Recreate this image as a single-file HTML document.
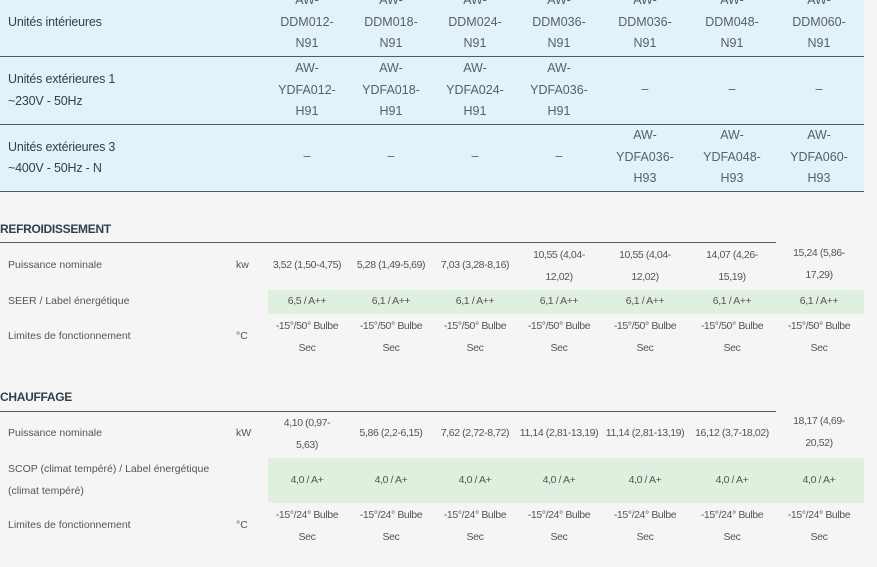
<!DOCTYPE html>
<html><head><meta charset="utf-8"><style>
*{margin:0;padding:0;box-sizing:border-box}
body{width:877px;height:567px;overflow:hidden;background:#f5f5f5;font-family:"Liberation Sans",sans-serif;position:relative;color:#555}
.a{position:absolute}
.blue{left:0;top:0;width:864px;height:192px;background:#e2f2fa}
.hl{position:absolute;height:1px;background:#4e5d6b}
.lab{position:absolute;left:8px;font-size:12.5px;color:#333f4c;line-height:22px;letter-spacing:-0.2px}
.c{position:absolute;width:90px;text-align:center;font-size:12.5px;line-height:21.5px;color:#5a5f66}
.s{position:absolute;width:90px;text-align:center;font-size:10.5px;line-height:22px;color:#555;letter-spacing:-0.4px;white-space:nowrap}
.l{position:absolute;left:8px;font-size:10.5px;line-height:22px;color:#555}
.u{position:absolute;left:236px;font-size:10.5px;line-height:22px;color:#555}
.h{position:absolute;left:0;font-size:12px;color:#333f4c;font-weight:600;letter-spacing:-0.3px}
.g{position:absolute;left:268px;width:596px;background:#e0f0df}
</style></head><body>
<div class="a blue"></div>
<div class="hl" style="left:0;top:56px;width:864px"></div>
<div class="hl" style="left:0;top:124px;width:864px"></div>
<div class="hl" style="left:0;top:191px;width:864px"></div>
<div class="lab" style="top:11px">Unités intérieures</div>
<div class="lab" style="top:68px">Unités extérieures 1</div>
<div class="lab" style="top:90px">~230V - 50Hz</div>
<div class="lab" style="top:136px">Unités extérieures 3</div>
<div class="lab" style="top:157px">~400V - 50Hz - N</div>

<div class="c" style="left:262px;top:-10px">AW-<br>DDM012-<br>N91</div>
<div class="c" style="left:346px;top:-10px">AW-<br>DDM018-<br>N91</div>
<div class="c" style="left:430px;top:-10px">AW-<br>DDM024-<br>N91</div>
<div class="c" style="left:514px;top:-10px">AW-<br>DDM036-<br>N91</div>
<div class="c" style="left:600px;top:-10px">AW-<br>DDM036-<br>N91</div>
<div class="c" style="left:687px;top:-10px">AW-<br>DDM048-<br>N91</div>
<div class="c" style="left:774px;top:-10px">AW-<br>DDM060-<br>N91</div>

<div class="c" style="left:262px;top:58px">AW-<br>YDFA012-<br>H91</div>
<div class="c" style="left:346px;top:58px">AW-<br>YDFA018-<br>H91</div>
<div class="c" style="left:430px;top:58px">AW-<br>YDFA024-<br>H91</div>
<div class="c" style="left:514px;top:58px">AW-<br>YDFA036-<br>H91</div>
<div class="c" style="left:600px;top:79px">–</div>
<div class="c" style="left:687px;top:79px">–</div>
<div class="c" style="left:774px;top:79px">–</div>

<div class="c" style="left:262px;top:146px">–</div>
<div class="c" style="left:346px;top:146px">–</div>
<div class="c" style="left:430px;top:146px">–</div>
<div class="c" style="left:514px;top:146px">–</div>
<div class="c" style="left:600px;top:125px">AW-<br>YDFA036-<br>H93</div>
<div class="c" style="left:687px;top:125px">AW-<br>YDFA048-<br>H93</div>
<div class="c" style="left:774px;top:125px">AW-<br>YDFA060-<br>H93</div>

<div class="h" style="top:222px">REFROIDISSEMENT</div>
<div class="hl" style="left:0;top:242px;width:776px"></div>
<div class="g" style="top:290px;height:24px"></div>
<div class="l" style="top:254px">Puissance nominale</div>
<div class="u" style="top:254px">kw</div>
<div class="s" style="left:262px;top:254px">3,52 (1,50-4,75)</div>
<div class="s" style="left:346px;top:254px">5,28 (1,49-5,69)</div>
<div class="s" style="left:430px;top:254px">7,03 (3,28-8,16)</div>
<div class="s" style="left:514px;top:244px">10,55 (4,04-<br>12,02)</div>
<div class="s" style="left:600px;top:244px">10,55 (4,04-<br>12,02)</div>
<div class="s" style="left:687px;top:244px">14,07 (4,26-<br>15,19)</div>
<div class="s" style="left:774px;top:242px">15,24 (5,86-<br>17,29)</div>
<div class="l" style="top:290px">SEER / Label énergétique</div>
<div class="s" style="left:262px;top:290px">6,5 / A++</div>
<div class="s" style="left:346px;top:290px">6,1 / A++</div>
<div class="s" style="left:430px;top:290px">6,1 / A++</div>
<div class="s" style="left:514px;top:290px">6,1 / A++</div>
<div class="s" style="left:600px;top:290px">6,1 / A++</div>
<div class="s" style="left:687px;top:290px">6,1 / A++</div>
<div class="s" style="left:774px;top:290px">6,1 / A++</div>
<div class="l" style="top:325px">Limites de fonctionnement</div>
<div class="u" style="top:325px">°C</div>
<div class="s" style="left:262px;top:315px">-15°/50° Bulbe<br>Sec</div>
<div class="s" style="left:346px;top:315px">-15°/50° Bulbe<br>Sec</div>
<div class="s" style="left:430px;top:315px">-15°/50° Bulbe<br>Sec</div>
<div class="s" style="left:514px;top:315px">-15°/50° Bulbe<br>Sec</div>
<div class="s" style="left:600px;top:315px">-15°/50° Bulbe<br>Sec</div>
<div class="s" style="left:687px;top:315px">-15°/50° Bulbe<br>Sec</div>
<div class="s" style="left:774px;top:315px">-15°/50° Bulbe<br>Sec</div>

<div class="h" style="top:390px">CHAUFFAGE</div>
<div class="hl" style="left:0;top:411px;width:776px"></div>
<div class="g" style="top:458px;height:45px"></div>
<div class="l" style="top:422px">Puissance nominale</div>
<div class="u" style="top:422px">kW</div>
<div class="s" style="left:262px;top:412px">4,10 (0,97-<br>5,63)</div>
<div class="s" style="left:346px;top:422px">5,86 (2,2-6,15)</div>
<div class="s" style="left:430px;top:422px">7,62 (2,72-8,72)</div>
<div class="s" style="left:514px;top:422px">11,14 (2,81-13,19)</div>
<div class="s" style="left:600px;top:422px">11,14 (2,81-13,19)</div>
<div class="s" style="left:687px;top:422px">16,12 (3,7-18,02)</div>
<div class="s" style="left:774px;top:410px">18,17 (4,69-<br>20,52)</div>
<div class="l" style="top:458px">SCOP (climat tempéré) / Label énergétique<br>(climat tempéré)</div>
<div class="s" style="left:262px;top:469px">4,0 / A+</div>
<div class="s" style="left:346px;top:469px">4,0 / A+</div>
<div class="s" style="left:430px;top:469px">4,0 / A+</div>
<div class="s" style="left:514px;top:469px">4,0 / A+</div>
<div class="s" style="left:600px;top:469px">4,0 / A+</div>
<div class="s" style="left:687px;top:469px">4,0 / A+</div>
<div class="s" style="left:774px;top:469px">4,0 / A+</div>
<div class="l" style="top:514px">Limites de fonctionnement</div>
<div class="u" style="top:514px">°C</div>
<div class="s" style="left:262px;top:504px">-15°/24° Bulbe<br>Sec</div>
<div class="s" style="left:346px;top:504px">-15°/24° Bulbe<br>Sec</div>
<div class="s" style="left:430px;top:504px">-15°/24° Bulbe<br>Sec</div>
<div class="s" style="left:514px;top:504px">-15°/24° Bulbe<br>Sec</div>
<div class="s" style="left:600px;top:504px">-15°/24° Bulbe<br>Sec</div>
<div class="s" style="left:687px;top:504px">-15°/24° Bulbe<br>Sec</div>
<div class="s" style="left:774px;top:504px">-15°/24° Bulbe<br>Sec</div>
</body></html>
